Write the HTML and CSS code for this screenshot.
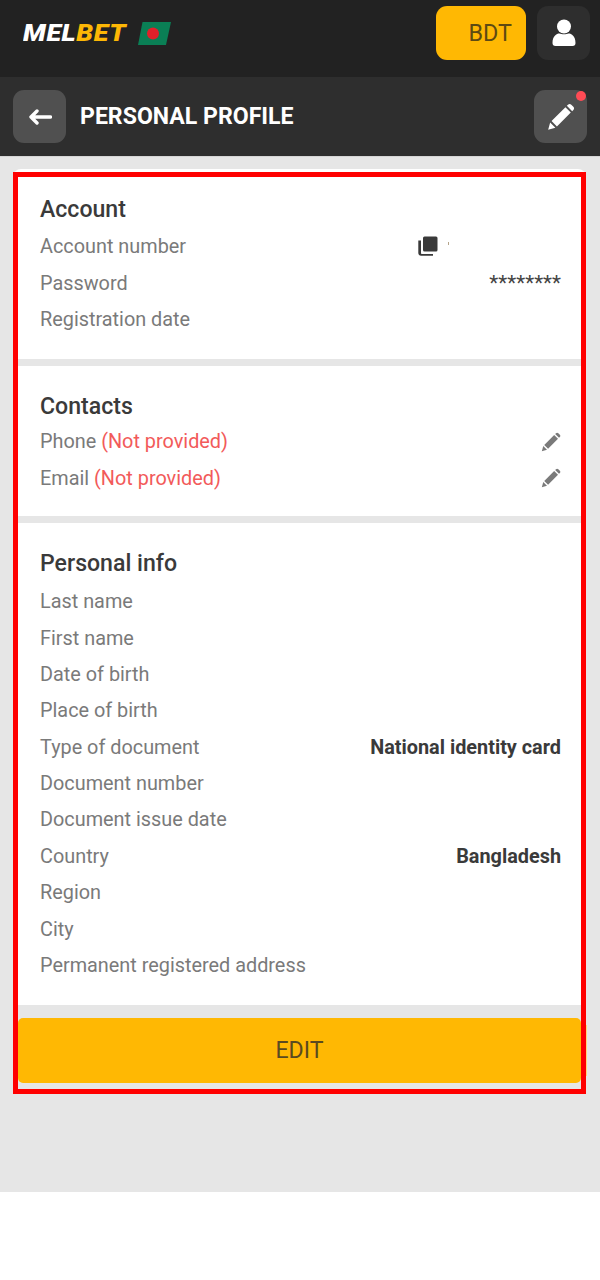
FILE: index.html
```html
<!DOCTYPE html>
<html lang="en">
<head>
<meta charset="utf-8">
<title>Personal profile</title>
<link rel="stylesheet" href="styles.css">
</head>
<body>
<div class="page">
  <header class="topbar">
    <div class="brand">
      <span class="logo"><span class="logo-mel">MEL</span><span class="logo-bet">BET</span></span>
      <svg class="flag" width="33" height="23" viewBox="0 0 33 23"><polygon points="4.500,0 33,0 28,23 0,23" fill="#0a7f55"/><circle cx="15" cy="11.500" r="6" fill="#e0202a"/></svg>
    </div>
    <div class="top-actions">
      <div class="balance">BDT</div>
      <div class="icon-btn user-btn">
        <svg width="24" height="28" viewBox="0 0 24 28"><circle cx="12" cy="7.500" r="7" fill="#fff"/><path d="M0.500 24c0-7 4-9.500 7-9.500 2 1 7 1 9 0 3 0 7 2.500 7 9.500 0 2-1 3-3 3H3.500c-2 0-3-1-3-3z" fill="#fff"/></svg>
      </div>
    </div>
  </header>
  <div class="subbar">
    <div class="icon-btn sub-btn">
      <svg width="24" height="16" viewBox="0 0 24 16"><path d="M22.500 8H3M9 2 3 8l6 6" fill="none" stroke="#fff" stroke-width="3.400" stroke-linecap="round" stroke-linejoin="round"/></svg>
    </div>
    <h1 class="page-title">PERSONAL PROFILE</h1>
    <div class="icon-btn sub-btn edit-btn">
      <svg width="28" height="28" viewBox="0 0 24 24"><path class="pen-w" d="M1 23l1.700-6.200 4.500 4.500zM3.900 15.500 15.800 3.600l4.600 4.600L8.500 20.100zM17 2.400l1-1c.8-.8 2-.8 2.800 0l1.800 1.800c.8.8.8 2 0 2.800l-1 1z"/></svg>
      <span class="dot"></span>
    </div>
  </div>
  <main class="content">
    <section class="card card-first">
      <h2 class="card-title">Account</h2>
      <div class="row">
        <span class="label">Account number</span>
        <span class="copy-wrap">
          <svg width="20" height="21" viewBox="0 0 20 21"><rect x="5" y="0.500" width="14.500" height="15" rx="1.500" fill="#3a3a3a"/><path d="M3 4.500v12.500c0 .6.400 1 1 1h11v1.700H3c-1.600 0-2.700-1.100-2.700-2.700V4.500z" fill="#3a3a3a"/></svg>
          <span class="speck"></span>
        </span>
      </div>
      <div class="row"><span class="label">Password</span><span class="mask">********</span></div>
      <div class="row"><span class="label">Registration date</span></div>
    </section>
    <section class="card card-contacts">
      <h2 class="card-title">Contacts</h2>
      <div class="row">
        <span class="label">Phone <span class="missing">(Not provided)</span></span>
        <svg class="pen" width="20" height="20" viewBox="0 0 24 24"><path class="pen-g" d="M1 23l1.700-6.200 4.500 4.500zM3.900 15.500 15.800 3.600l4.600 4.600L8.500 20.100zM17 2.400l1-1c.8-.8 2-.8 2.800 0l1.800 1.800c.8.8.8 2 0 2.800l-1 1z"/></svg>
      </div>
      <div class="row">
        <span class="label">Email <span class="missing">(Not provided)</span></span>
        <svg class="pen" width="20" height="20" viewBox="0 0 24 24"><path class="pen-g" d="M1 23l1.700-6.200 4.500 4.500zM3.900 15.500 15.800 3.600l4.600 4.600L8.500 20.100zM17 2.400l1-1c.8-.8 2-.8 2.800 0l1.800 1.800c.8.8.8 2 0 2.800l-1 1z"/></svg>
      </div>
    </section>
    <section class="card card-personal">
      <h2 class="card-title">Personal info</h2>
      <div class="row"><span class="label">Last name</span></div>
      <div class="row"><span class="label">First name</span></div>
      <div class="row"><span class="label">Date of birth</span></div>
      <div class="row"><span class="label">Place of birth</span></div>
      <div class="row"><span class="label">Type of document</span><span class="value">National identity card</span></div>
      <div class="row"><span class="label">Document number</span></div>
      <div class="row"><span class="label">Document issue date</span></div>
      <div class="row"><span class="label">Country</span><span class="value">Bangladesh</span></div>
      <div class="row"><span class="label">Region</span></div>
      <div class="row"><span class="label">City</span></div>
      <div class="row"><span class="label">Permanent registered address</span></div>
    </section>
    <button class="edit-action" type="button">EDIT</button>
    <div class="highlight"></div>
  </main>
  <div class="footer-space"></div>
</div>
</body>
</html>
```
FILE: styles.css
```css
* { box-sizing: border-box; }
html, body { margin: 0; padding: 0; }
body { font-family: Roboto, "Liberation Sans", sans-serif; background: #fff; }
.page { width: 600px; height: 1280px; overflow: hidden; display: flex; flex-direction: column; }

.topbar { height: 77px; background: #222; display: flex; justify-content: space-between; padding: 6px 10px 0 23px; flex: none; }
.brand { display: flex; align-items: center; gap: 12px; height: 54px; }
.logo { font-size: 24px; font-weight: 900; font-style: italic; letter-spacing: 0.6px; line-height: 1; transform: scaleX(1.115); transform-origin: left center; width: 103px; white-space: nowrap; display: block; }
.logo-mel { color: #fff; }
.logo-bet { color: #fdb705; }
.top-actions { display: flex; gap: 11px; }
.balance { width: 90px; height: 54px; border-radius: 11px; background: #ffb803; color: #5d4a13; font-size: 23.300px; display: flex; align-items: center; justify-content: flex-end; padding-right: 14px; }
.icon-btn { width: 53px; height: 53px; border-radius: 11px; display: flex; align-items: center; justify-content: center; position: relative; flex: none; }
.user-btn { background: #2e2e2e; height: 54px; }

.subbar { height: 80px; background: #2e2e2e; display: flex; align-items: center; padding: 0 13px; flex: none; border-bottom: 1px solid #d6d6d6; }
.sub-btn { background: #505050; }
.page-title { margin: 0 0 0 14px; flex: 1; color: #fff; font-size: 23.100px; font-weight: 700; }
.pen-w { fill: #fff; }
.dot { position: absolute; top: 1px; right: 1px; width: 10px; height: 10px; border-radius: 50%; background: #ff4b55; }

.content { position: relative; height: 1035px; background: #e6e6e6; flex: none; padding: 12px 14px 0 13px; display: flex; flex-direction: column; gap: 7px; }
.card { background: #fff; padding: 23px 25px 21px 27px; }
.card-first { border-radius: 8px 8px 0 0; }
.card-first .card-title { margin-bottom: 0.500px; }
.card-contacts { padding: 23px 25px 20px 27px; }
.card-contacts .card-title { margin-bottom: -1px; }
.card-personal { padding-bottom: 21.500px; }
.card-personal .card-title { margin-bottom: 1px; }
.card-title { margin: 0; font-size: 23.100px; font-weight: 500; color: #3a3a3a; line-height: 36px; }
.row { height: 36.400px; display: flex; align-items: center; justify-content: space-between; font-size: 19.850px; }
.label { color: #7a7a7a; }
.missing { color: #f25a5a; }
.value { color: #3a3a3a; font-weight: 700; }
.mask { color: #444; font-size: 20.800px; }
.copy-wrap { display: flex; align-items: flex-start; margin-right: 112px; gap: 10px; }
.speck { width: 1px; height: 3px; margin-top: 6px; background: #b5a48a; }
.pen-g { fill: #7a7a7a; }

.edit-action { position: relative; margin: 6px 5px 0 5px; height: 65px; border: 0; border-radius: 5px; background: #ffb803; color: #5a4a20; font: 400 23.100px Roboto, "Liberation Sans", sans-serif; flex: none; }
.edit-action::after { content: ""; position: absolute; top: 7px; bottom: 7px; right: -6px; width: 2px; background: #ffd87a; }
.highlight { position: absolute; left: 13px; top: 15px; width: 573px; height: 922px; border: 5px solid #f00; pointer-events: none; }
.footer-space { flex: 1; background: #fff; }
```
